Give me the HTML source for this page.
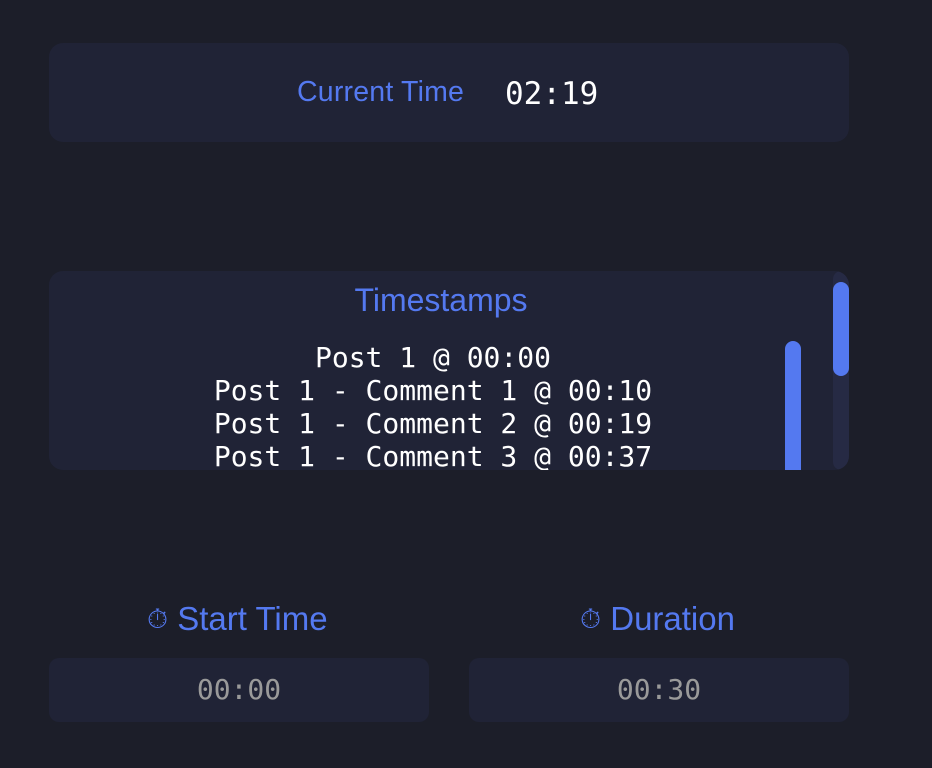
<!DOCTYPE html>
<html><head><style>
body{margin:0;width:932px;height:768px;background:#1c1e29;position:relative;overflow:hidden;font-family:"Liberation Sans",sans-serif}
.card{position:absolute;background:#202336;border-radius:14px}
.mono{font-family:"DejaVu Sans Mono","Liberation Mono",monospace}
.blue{color:#5479f0}
</style></head><body>
<div class="card" style="left:49px;top:43px;width:800px;height:99px"></div>
<div class="blue" style="position:absolute;left:297px;top:76px;font-size:28.5px;letter-spacing:0.2px">Current Time</div>
<div class="mono" style="position:absolute;left:505px;top:76px;font-size:31px;color:#fff">02:19</div>

<div class="card" style="left:49px;top:271px;width:800px;height:199px;overflow:hidden">
  <div class="blue" style="position:absolute;left:0;width:784px;text-align:center;top:11px;font-size:32px">Timestamps</div>
  <div class="mono" style="position:absolute;left:0;width:768px;text-align:center;top:70px;font-size:28px;line-height:33px;color:#fff;white-space:pre">Post 1 @ 00:00
Post 1 - Comment 1 @ 00:10
Post 1 - Comment 2 @ 00:19
Post 1 - Comment 3 @ 00:37</div>
  <div style="position:absolute;left:736px;top:70px;width:16px;height:160px;background:#5479f0;border-radius:8px"></div>
  <div style="position:absolute;left:784px;top:0;width:16px;height:199px;background:#262a44;border-radius:8px"></div>
  <div style="position:absolute;left:784px;top:11px;width:16px;height:94px;background:#5479f0;border-radius:8px"></div>
</div>

<div class="blue" style="position:absolute;left:147px;top:600px;font-size:33px"><span style="font-size:27px;vertical-align:2px">⏱</span> Start Time</div>
<div class="blue" style="position:absolute;left:580px;top:600px;font-size:33px"><span style="font-size:27px;vertical-align:2px">⏱</span> Duration</div>
<div class="card mono" style="left:49px;top:658px;width:380px;height:64px;border-radius:10px;text-align:center;line-height:64px;font-size:28px;color:#9a9a9a">00:00</div>
<div class="card mono" style="left:469px;top:658px;width:380px;height:64px;border-radius:10px;text-align:center;line-height:64px;font-size:28px;color:#9a9a9a">00:30</div>
</body></html>
